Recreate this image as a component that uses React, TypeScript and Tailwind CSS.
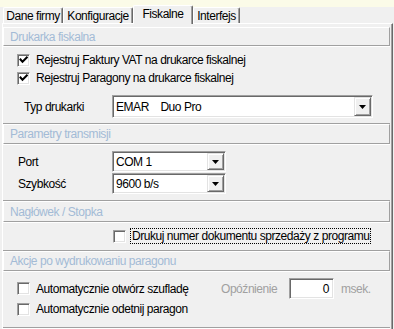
import React from 'react';

function CheckBox({ checked }: { checked?: boolean }) {
  return (
    <div className="w-[13px] h-[13px] shrink-0 bg-white border border-t-[#a0a0a0] border-l-[#a0a0a0] border-b-white border-r-white shadow-[inset_1px_1px_0_#696969,inset_-1px_-1px_0_#e3e3e3]">
      {checked && (
        <svg width="11" height="11" viewBox="0 0 11 11">
          <path d="M2.5 4.5 L4.5 6.8 L8.8 2.5" fill="none" stroke="#000" strokeWidth="2" strokeLinecap="square" />
        </svg>
      )}
    </div>
  );
}

function Combo({ value, className }: { value: string; className: string }) {
  return (
    <div className={`${className} flex bg-white border border-t-[#a0a0a0] border-l-[#a0a0a0] border-b-white border-r-white shadow-[inset_1px_1px_0_#696969,inset_-1px_-1px_0_#e3e3e3] p-[1px]`}>
      <div className="flex-1 flex items-center pl-[2px] whitespace-pre">{value}</div>
      <div className="w-[17px] flex items-center justify-center bg-[#f0f0f0] border border-t-[#e3e3e3] border-l-[#e3e3e3] border-b-[#696969] border-r-[#696969] shadow-[inset_1px_1px_0_#fff,inset_-1px_-1px_0_#a0a0a0]">
        <svg width="7" height="4" viewBox="0 0 7 4">
          <polygon points="0,0 7,0 3.5,4" fill="#000" />
        </svg>
      </div>
    </div>
  );
}

function Header({ title, h }: { title: string; h: string }) {
  return (
    <div className={`${h} flex items-center pl-[6px] border border-t-white border-l-white border-b-[#a0a0a0] border-r-[#a0a0a0] text-[#a3bbd6]`}>
      {title}
    </div>
  );
}

const tabs = [
  { label: 'Dane firmy', w: 'w-[60px]' },
  { label: 'Konfiguracje', w: 'w-[70px]' },
  { label: 'Fiskalne', w: 'w-[60px]', active: true },
  { label: 'Interfejs', w: 'w-[47px]' },
];

export default function App() {
  return (
    <div className="w-[394px] h-[329px] overflow-hidden bg-[#f0f0f0] text-black text-[12px] tracking-[-0.45px] leading-none font-['Liberation_Sans',Arial,sans-serif]">
      {/* Tabs */}
      <div className="h-[23px] flex items-end pl-[3px] bg-[linear-gradient(#fbfbe8_7px,#f0f0f0_7px)]">
        {tabs.map((t) =>
          t.active ? (
            <div
              key={t.label}
              className={`${t.w} h-[19px] mb-[-1px] relative z-10 flex items-center justify-center pb-[3px] bg-[#f0f0f0] border-l border-t border-r border-l-white border-t-white border-r-[#696969] shadow-[inset_-1px_0_0_#a0a0a0] rounded-t-[2px]`}
            >
              {t.label}
            </div>
          ) : (
            <div
              key={t.label}
              className={`${t.w} h-[16px] flex items-center justify-center bg-[#f0f0f0] border-l border-t border-r border-l-white border-t-white border-r-[#696969] shadow-[inset_-1px_0_0_#a0a0a0] rounded-t-[2px]`}
            >
              {t.label}
            </div>
          )
        )}
      </div>

      {/* Panel */}
      <div className="ml-[2px] w-[391px] h-[320px] pt-[3px] pr-[2px] border-l border-t border-r border-l-white border-t-white border-r-[#696969] shadow-[inset_-1px_0_0_#a0a0a0]">
        <Header title="Drukarka fiskalna" h="h-[19px]" />
        <div className="border-y border-t-white border-b-[#a0a0a0] pt-[4px] pb-[5px]">
          <div className="h-[18px] flex items-center pl-[14px] gap-[6px]">
            <CheckBox checked />
            <span>Rejestruj Faktury VAT na drukarce fiskalnej</span>
          </div>
          <div className="h-[18px] flex items-center pl-[14px] gap-[6px]">
            <CheckBox checked />
            <span>Rejestruj Paragony na drukarce fiskalnej</span>
          </div>
          <div className="mt-[8px] flex items-center">
            <span className="w-[109px] pl-[21px]">Typ drukarki</span>
            <Combo value="EMAR    Duo Pro" className="w-[261px] h-[23px]" />
          </div>
        </div>

        <Header title="Parametry transmisji" h="h-[20px]" />
        <div className="border-y border-t-white border-b-[#a0a0a0] pt-[6px] pb-[6px] flex flex-col gap-[1px]">
          <div className="flex items-center">
            <span className="w-[109px] pl-[15px]">Port</span>
            <Combo value="COM 1" className="w-[114px] h-[21px]" />
          </div>
          <div className="flex items-center">
            <span className="w-[109px] pl-[15px]">Szybkość</span>
            <Combo value="9600 b/s" className="w-[114px] h-[21px]" />
          </div>
        </div>

        <Header title="Nagłówek / Stopka" h="h-[21px]" />
        <div className="border-y border-t-white border-b-[#a0a0a0] pt-[5px] pb-[6px]">
          <div className="h-[16px] flex items-center pl-[110px] gap-[4px]">
            <CheckBox />
            <span className="h-[16px] flex items-center px-[1px] border border-dotted border-black">
              Drukuj numer dokumentu sprzedaży z programu
            </span>
          </div>
        </div>

        <Header title="Akcje po wydrukowaniu paragonu" h="h-[20px]" />
        <div className="border-y border-t-white border-b-[#a0a0a0] pt-[6px] pb-[9px]">
          <div className="h-[21px] flex items-center pl-[14px]">
            <div className="w-[204px] flex items-center gap-[6px]">
              <CheckBox />
              <span>Automatycznie otwórz szufladę</span>
            </div>
            <span className="w-[68px] text-[#a0a0a0]">Opóźnienie</span>
            <div className="w-[45px] h-[21px] flex items-center justify-end pr-[4px] bg-white border border-t-[#a0a0a0] border-l-[#a0a0a0] border-b-white border-r-white shadow-[inset_1px_1px_0_#696969,inset_-1px_-1px_0_#e3e3e3]">
              0
            </div>
            <span className="ml-[7px] text-[#a0a0a0]">msek.</span>
          </div>
          <div className="mt-[1px] h-[18px] flex items-center pl-[14px] gap-[6px]">
            <CheckBox />
            <span>Automatycznie odetnij paragon</span>
          </div>
        </div>
        <div className="h-[2px] border-t border-white" />
      </div>
    </div>
  );
}
